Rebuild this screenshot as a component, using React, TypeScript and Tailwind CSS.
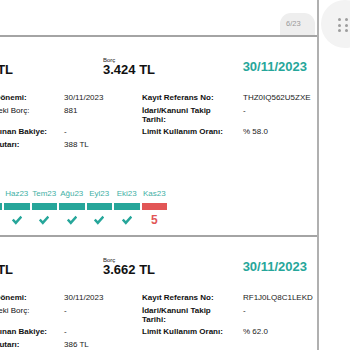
type Statement = {
  limit: string;
  debt: string;
  date: string;
  period: string;
  overdue: string;
  carried: string;
  minimum: string;
  ref: string;
  legal: string;
  usage: string;
  late: number[];
};

const months = ["Nis23", "May23", "Haz23", "Tem23", "Ağu23", "Eyl23", "Eki23", "Kas23"];

const statements: Statement[] = [
  {
    limit: "3.812 TL",
    debt: "3.424 TL",
    date: "30/11/2023",
    period: "30/11/2023",
    overdue: "881",
    carried: "-",
    minimum: "388 TL",
    ref: "THZ0IQ562U5ZXE",
    legal: "-",
    usage: "% 58.0",
    late: [0, 0, 0, 0, 0, 0, 0, 5],
  },
  {
    limit: "3.962 TL",
    debt: "3.662 TL",
    date: "30/11/2023",
    period: "30/11/2023",
    overdue: "-",
    carried: "-",
    minimum: "386 TL",
    ref: "RF1J0LQ8C1LEKD",
    legal: "-",
    usage: "% 62.0",
    late: [0, 0, 0, 0, 0, 0, 0, 0],
  },
];

const Check = () => (
  <svg width="10" height="10" viewBox="0 0 10 10" fill="none">
    <path d="M0.8 4.6L3.8 7.8L9.4 1.6" stroke="#26a69a" strokeWidth="2.5" />
  </svg>
);

const Card = ({ s }: { s: Statement }) => {
  return (
    <div className="h-[200px] shrink-0 border-t-2 border-[#a4a4a4] flex flex-col">
      <div className="flex items-center pl-[12px] pr-[10px] pt-[20px]">
        <div className="w-[142px] shrink-0">
          <div className="text-[6px] leading-[6px] text-[#222]">Limit</div>
          <div className="text-[13px] leading-[13px] font-bold text-[#111]">{s.limit}</div>
        </div>
        <div>
          <div className="text-[6px] leading-[6px] text-[#222]">Borç</div>
          <div className="text-[13px] leading-[13px] font-bold text-[#111]">{s.debt}</div>
        </div>
        <div className="ml-auto text-[13px] leading-[13px] font-bold text-[#26a69a]">{s.date}</div>
      </div>

      <div className="mt-[17px] pl-[19px] grid grid-cols-[96px_78px_101px_auto] gap-y-[3.5px] text-[8px] leading-[9px] text-[#111] whitespace-nowrap">
        <div className="font-bold">Ekstre Dönemi:</div>
        <div className="text-[#222]">{s.period}</div>
        <div className="font-bold pr-[12px]">Kayıt Referans No:</div>
        <div className="text-[#222]">{s.ref}</div>

        <div>Dönemdeki Borç:</div>
        <div className="text-[#222]">{s.overdue}</div>
        <div className="font-bold pr-[12px] whitespace-normal">
          İdari/Kanuni Takip
          <br />
          Tarihi:
        </div>
        <div className="text-[#222]">{s.legal}</div>

        <div className="font-bold">Yeni Taşınan Bakiye:</div>
        <div className="text-[#222]">{s.carried}</div>
        <div className="font-bold pr-[12px]">Limit Kullanım Oranı:</div>
        <div className="text-[#222]">{s.usage}</div>

        <div className="font-bold">Asgari Tutarı:</div>
        <div className="text-[#222]">{s.minimum}</div>
        <div></div>
        <div></div>
      </div>

      <div className="mt-auto mb-[10px] flex gap-[2px]">
        {months.map((m, i) => (
          <div key={m} className="w-[25.5px] shrink-0 flex flex-col items-center">
            <div className="text-[8px] leading-[9px] text-[#3fb0a5] whitespace-nowrap">{i < 2 ? "\u00a0" : m}</div>
            <div
              className={
                s.late[i] > 0
                  ? "mt-[5.5px] h-[7px] w-full bg-[#e25656]"
                  : "mt-[5.5px] h-[7px] w-full bg-[#26a69a]"
              }
            ></div>
            <div className="mt-[5px] h-[10px] flex items-center justify-center">
              {s.late[i] > 0 ? (
                <span className="text-[12px] leading-[10px] font-bold text-[#e25656]">{s.late[i]}</span>
              ) : (
                <Check />
              )}
            </div>
          </div>
        ))}
      </div>
    </div>
  );
};

export default function App() {
  return (
    <div className="w-[350px] h-[350px] overflow-hidden bg-white flex font-['Liberation_Sans',Arial,sans-serif]">
      <div className="-ml-[51px] w-[370px] shrink-0 border-r-2 border-[#b0b0b0] flex flex-col">
        <div className="h-[35px] shrink-0 flex justify-end items-end pr-[2px]">
          <div className="w-[35px] h-[22px] bg-[#eeeeee] rounded-t-[11px] flex items-center pl-[6px]">
            <span className="text-[7.5px] leading-[8px] text-[#999]">6/23</span>
          </div>
        </div>
        {statements.map((s, i) => (
          <Card key={i} s={s} />
        ))}
      </div>
      <div className="ml-[2px] shrink-0">
        <div className="w-[48px] h-[48px] rounded-full bg-[#f3f3f3] pl-[17px] pt-[18px]">
          <div className="grid grid-cols-[3px_3px] gap-x-[3.5px] gap-y-[2.5px]">
            {[0, 1, 2, 3, 4, 5].map((d) => (
              <div key={d} className="w-[3px] h-[3px] rounded-full bg-[#9e9e9e]"></div>
            ))}
          </div>
        </div>
      </div>
    </div>
  );
}
